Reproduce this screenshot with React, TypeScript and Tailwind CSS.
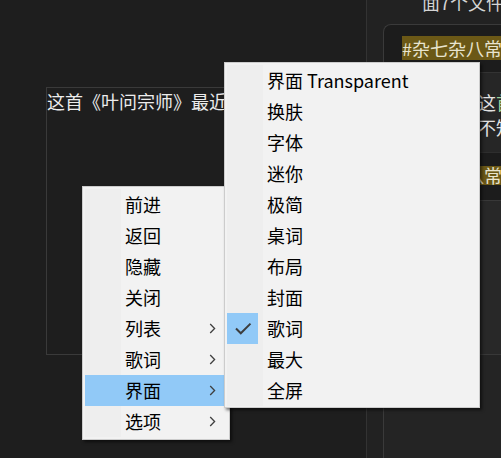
import React from 'react'

const mainItems = [
    { label: '前进' },
    { label: '返回' },
    { label: '隐藏' },
    { label: '关闭' },
    { label: '列表', sub: true },
    { label: '歌词', sub: true },
    { label: '界面', sub: true, active: true },
    { label: '选项', sub: true },
]

const subItems = [
    { label: '界面 Transparent' },
    { label: '换肤' },
    { label: '字体' },
    { label: '迷你' },
    { label: '极简' },
    { label: '桌词' },
    { label: '布局' },
    { label: '封面' },
    { label: '歌词', checked: true },
    { label: '最大' },
    { label: '全屏' },
]

const Chevron = () => (
    <svg width="7" height="11" viewBox="0 0 7 11" fill="none">
        <path d="M1.2 1 L5.6 5.5 L1.2 10" stroke="#3f3f3f" strokeWidth="1.3" />
    </svg>
)

const Check = () => (
    <svg width="31" height="31" viewBox="0 0 31 31" fill="none">
        <path d="M9 15.5 L13.8 20.3 L23.5 10.6" stroke="#3c3c3c" strokeWidth="2" />
    </svg>
)

const App = () => {
    return (
        <div
            className="relative w-[501px] h-[458px] overflow-hidden bg-[#1e1e1e] flex"
            style={{ fontFamily: '"Noto Sans CJK SC", "Noto Sans", sans-serif' }}>
            {/* left: lyric box */}
            <div className="w-[366px] shrink-0 pt-[87px] pl-[46px]">
                <div className="h-[268px] w-[300px] border border-[#3a3a3a] overflow-hidden">
                    <div className="text-[18px] leading-[24px] text-[#ececec] whitespace-nowrap pt-[1px]">
                        这首《叶问宗师》最近很火，听了好多遍
                    </div>
                </div>
            </div>

            {/* right panel */}
            <div className="flex-1 flex flex-col border-l border-[#333333] bg-[#222222] overflow-hidden">
                <div className="h-[24px] shrink-0 pl-[55px] overflow-hidden">
                    <div className="-mt-[10px] text-[18px] leading-[24px] text-[#d4d4d4] whitespace-nowrap">
                        面7个文件夹
                    </div>
                </div>
                <div className="ml-[16px] w-[300px] flex-1 rounded-tl-[8px] border-l border-t border-[#3a3a3a] bg-[#1c1c1c] flex flex-col">
                    <div className="h-[47px] shrink-0 pl-[18px] pt-[11px]">
                        <span className="bg-[#6b5816] text-[#e8e4cf] text-[18px] leading-[24px] inline-block whitespace-nowrap">
                            #杂七杂八常用
                        </span>
                    </div>
                    <div className="h-[80px] shrink-0 border-t border-[#333333] bg-[#262626] pl-[22px] pt-[17px] text-[18px] leading-[25px] text-[#e2e2e2] whitespace-nowrap">
                        <div>
                            我很喜欢这<span className="text-[#9ad39a]">首</span>歌
                        </div>
                        <div>但是我也不知道</div>
                    </div>
                    <div className="h-[48px] shrink-0 border-t border-[#2e2e2e] pl-[18px] pt-[11px]">
                        <span className="bg-[#6b5816] text-[#e8e4cf] text-[18px] leading-[19px] inline-block whitespace-nowrap">
                            #杂七杂八常用
                        </span>
                    </div>
                    <div className="h-[154px] shrink-0 border-t border-[#383838] bg-[#282828]" />
                    <div className="flex-1 border-t border-[#383838] bg-[#242424]" />
                </div>
            </div>

            {/* main context menu */}
            <div className="absolute left-[82px] top-[186px] w-[148px] h-[254px] bg-[#f2f2f2] border border-[#cccccc] p-[2px] shadow-[2px_2px_3px_rgba(0,0,0,0.55)] z-10">
                {mainItems.map((item, index) => (
                    <div
                        key={index}
                        className={
                            item.active
                                ? 'h-[31px] flex items-center bg-[#91c9f7]'
                                : 'h-[31px] flex items-center'
                        }>
                        <div className={item.active ? 'w-[36px] h-full' : 'w-[36px] h-full bg-[#eeeeee]'} />
                        <div className="flex-1 pl-[4px] -mt-[2px] text-[18px] text-black leading-none">
                            {item.label}
                        </div>
                        <div className="w-[18px] flex items-center">{item.sub && <Chevron />}</div>
                    </div>
                ))}
            </div>

            {/* submenu */}
            <div className="absolute left-[224px] top-[62px] w-[256px] h-[346px] bg-[#f2f2f2] border border-[#cccccc] pt-[2px] px-[2px] shadow-[2px_2px_3px_rgba(0,0,0,0.55)] z-20">
                {subItems.map((item, index) => (
                    <div key={index} className="h-[31px] flex items-center">
                        <div className="w-[36px] h-full bg-[#eeeeee]">
                            {item.checked && (
                                <div className="w-[31px] h-[31px] bg-[#91c9f7]">
                                    <Check />
                                </div>
                            )}
                        </div>
                        <div className="flex-1 pl-[4px] -mt-[2px] text-[18px] text-black leading-none whitespace-nowrap">
                            {item.label}
                        </div>
                    </div>
                ))}
            </div>
        </div>
    )
}

export default App
